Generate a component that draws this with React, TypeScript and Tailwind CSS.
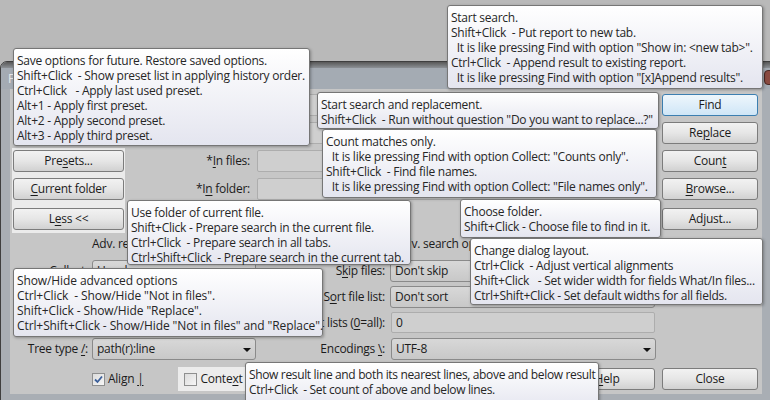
import React from "react";

function U({ children }: { children: React.ReactNode }) {
  return <span className="underline decoration-1 underline-offset-[2px]">{children}</span>;
}

function Tip({ className, lines }: { className: string; lines: string[] }) {
  return (
    <div
      className={`absolute rounded-[3px] border border-[#767676] bg-linear-to-b from-[#ffffff] to-[#e4e5ef] pl-[3px] pt-[4px] text-[#262626] shadow-[1px_1px_3px_rgba(0,0,0,0.3)] ${className}`}
    >
      {lines.map((l, i) => (
        <div key={i} className="h-[15px] whitespace-pre leading-[15px]">
          {l}
        </div>
      ))}
    </div>
  );
}

function Btn({ children, focused }: { children: React.ReactNode; focused?: boolean }) {
  return focused ? (
    <div className="flex h-[22px] w-full items-center justify-center rounded-[3px] border border-[#3c7fb1] bg-linear-to-b from-[#eef6fc] to-[#cfe6f7] text-[#1b1b1b]">
      {children}
    </div>
  ) : (
    <div className="flex h-[22px] w-full items-center justify-center rounded-[3px] border border-[#7c7c7c] bg-linear-to-b from-[#f2f2f2] via-[#e6e6e6] to-[#d1d1d1] text-[#1b1b1b]">
      {children}
    </div>
  );
}

function Combo({ text }: { text?: string }) {
  return (
    <div className="relative flex h-full w-full items-center rounded-[3px] border border-[#8a8a8a] bg-linear-to-b from-[#d8d8d8] to-[#c8c8c8] pl-[4px]">
      <span>{text}</span>
      <svg className="absolute right-[4px] top-[9px]" width="8" height="4" viewBox="0 0 8 4">
        <path d="M0 0h8L4 4z" fill="#111" />
      </svg>
    </div>
  );
}

function Field({ text }: { text?: string }) {
  return (
    <div className="flex h-full w-full items-center rounded-[2px] border border-[#adadad] bg-[#cfcfcf] pl-[4px]">
      {text}
    </div>
  );
}

function Check({ checked }: { checked?: boolean }) {
  return (
    <div className="flex h-[13px] w-[13px] items-center justify-center border border-[#8e8f8f] bg-linear-to-br from-[#dcdcdc] to-[#f6f6f6]">
      {checked ? (
        <svg width="9" height="9" viewBox="0 0 9 9">
          <path d="M1 4.5 L3.5 7 L8 1.5" stroke="#3b5f9a" strokeWidth="1.8" fill="none" />
        </svg>
      ) : null}
    </div>
  );
}

export default function App() {
  return (
    <div className="relative h-[400px] w-[770px] overflow-hidden bg-[#b9b9b9] font-['Open_Sans',sans-serif] text-[12px] tracking-[-0.25px] text-[#1b1b1b]">
      {/* Window */}
      <div className="absolute left-0 top-[61px] flex h-[345px] w-[780px] flex-col rounded-t-[7px] border border-[#3f3f3f] bg-[#a9aeb4]">
        <div className="h-[6px] rounded-t-[6px] bg-linear-to-b from-[#585858] to-[#8d9196]" />
        <div className="relative flex h-[21px] items-center bg-[#a4abb3] pl-[7px] text-[#e8e8e8]">
          Find in Files
          <div className="absolute left-[763px] top-[2px] h-[15px] w-[14px] rounded-[4px] border border-[#4a2a25] bg-[#8a4a40]" />
        </div>
        <div className="ml-[9px] flex h-[305px] w-[752px] bg-[#c6c6c6]">
          {/* Main column */}
          <div className="flex w-[646px] flex-col">
            <div className="mt-[5px] flex h-[22px] items-center">
              <div className="w-[247px]" />
              <div className="mr-[1px] h-full flex-1">
                <Field />
              </div>
            </div>
            <div className="mt-[6px] flex h-[22px] items-center">
              <div className="w-[247px]" />
              <div className="mr-[1px] h-full flex-1">
                <Field />
              </div>
            </div>
            <div className="mt-[4px] flex">
              <div className="ml-[2px] flex w-[113px] flex-col bg-[#ebebeb] pb-[3px] pl-[1px] pr-[1px] pt-[2px]">
                <Btn>
                  Pre<U>s</U>ets...
                </Btn>
                <div className="mt-[6px]">
                  <Btn>
                    <U>C</U>urrent folder
                  </Btn>
                </div>
                <div className="mt-[8px]">
                  <Btn>
                    L<U>e</U>ss &lt;&lt;
                  </Btn>
                </div>
              </div>
              <div className="flex flex-1 flex-col">
                <div className="mt-[2px] flex h-[22px] items-center">
                  <div className="w-[125px] text-right">
                    *<U>I</U>n files:
                  </div>
                  <div className="ml-[7px] mr-[1px] h-full flex-1">
                    <Field />
                  </div>
                </div>
                <div className="mt-[6px] flex h-[22px] items-center">
                  <div className="w-[125px] text-right">
                    *I<U>n</U> folder:
                  </div>
                  <div className="ml-[7px] mr-[1px] h-full flex-1">
                    <Field />
                  </div>
                </div>
              </div>
            </div>
            <div className="mt-[3px] flex h-[16px] items-center">
              <div className="w-[246px] pl-[82px]">Adv. report options</div>
              <div className="pl-[141px]">Adv. search options</div>
            </div>
            {/* lower rows */}
            <div className="mt-[8px] flex h-[22px]">
              <div className="flex w-[246px] items-center">
                <div className="w-[78px] text-right">Collect:</div>
                <div className="ml-[4px] h-full w-[164px]">
                  <Combo text="Usual" />
                </div>
              </div>
              <div className="flex w-[400px] items-center">
                <div className="w-[129px] text-right">
                  S<U>k</U>ip files:
                </div>
                <div className="ml-[5px] h-full w-[265px]">
                  <Combo text="Don't skip" />
                </div>
              </div>
            </div>
            <div className="mt-[4px] flex h-[22px]">
              <div className="flex w-[246px] items-center">
                <div className="ml-[82px] h-full w-[164px]">
                  <Combo />
                </div>
              </div>
              <div className="flex w-[400px] items-center">
                <div className="w-[129px] text-right">
                  S<U>o</U>rt file list:
                </div>
                <div className="ml-[5px] h-full w-[265px]">
                  <Combo text="Don't sort" />
                </div>
              </div>
            </div>
            <div className="mt-[4px] flex h-[21px]">
              <div className="flex w-[246px] items-center">
                <div className="ml-[82px] h-full w-[164px]">
                  <Field />
                </div>
              </div>
              <div className="flex w-[400px] items-center">
                <div className="w-[129px] whitespace-nowrap text-right">
                  Context lists (<U>0</U>=all):
                </div>
                <div className="ml-[6px] h-full w-[264px]">
                  <Field text="0" />
                </div>
              </div>
            </div>
            <div className="mt-[5px] flex h-[22px]">
              <div className="flex w-[246px] items-center">
                <div className="w-[78px] text-right">
                  Tree type <U>/</U>:
                </div>
                <div className="ml-[4px] h-full w-[164px]">
                  <Combo text="path(r):line" />
                </div>
              </div>
              <div className="flex w-[400px] items-center">
                <div className="w-[129px] text-right">
                  Encodings <U>\</U>:
                </div>
                <div className="ml-[6px] h-full w-[265px]">
                  <Combo text="UTF-8" />
                </div>
              </div>
            </div>
            <div className="mt-[8px] flex h-[22px] items-center">
              <div className="ml-[82px] flex items-center">
                <Check checked />
                <span className="ml-[3px]">
                  Align <U>|</U>
                </span>
              </div>
              <div className="ml-[35px] flex h-[24px] items-center bg-[#ececec] pl-[6px] pr-[4px]">
                <Check />
                <span className="ml-[3px]">
                  Conte<U>x</U>t
                </span>
              </div>
              <div className="ml-auto mr-[1px] w-[96px]">
                <Btn>
                  <U>H</U>elp
                </Btn>
              </div>
            </div>
          </div>
          {/* Right column */}
          <div className="ml-[6px] flex w-[96px] flex-col">
            <div className="mt-[5px]">
              <Btn focused>Find</Btn>
            </div>
            <div className="mt-[6px]">
              <Btn>
                Re<U>p</U>lace
              </Btn>
            </div>
            <div className="mt-[6px]">
              <Btn>
                Coun<U>t</U>
              </Btn>
            </div>
            <div className="mt-[6px]">
              <Btn>
                <U>B</U>rowse...
              </Btn>
            </div>
            <div className="mt-[8px]">
              <Btn>
                Ad<U>j</U>ust...
              </Btn>
            </div>
            <div className="mb-[4px] mt-auto">
              <Btn>Close</Btn>
            </div>
          </div>
        </div>
      </div>

      {/* Tooltips */}
      <Tip
        className="left-[447px] top-[5px] h-[84px] w-[316px]"
        lines={[
          "Start search.",
          "Shift+Click  - Put report to new tab.",
          '  It is like pressing Find with option "Show in: <new tab>".',
          "Ctrl+Click  - Append result to existing report.",
          '  It is like pressing Find with option "[x]Append results".',
        ]}
      />
      <Tip
        className="left-[13px] top-[48px] h-[98px] w-[297px]"
        lines={[
          "Save options for future. Restore saved options.",
          "Shift+Click  - Show preset list in applying history order.",
          "Ctrl+Click   - Apply last used preset.",
          "Alt+1 - Apply first preset.",
          "Alt+2 - Apply second preset.",
          "Alt+3 - Apply third preset.",
        ]}
      />
      <Tip
        className="left-[317px] top-[92px] h-[37px] w-[342px]"
        lines={["Start search and replacement.", 'Shift+Click  - Run without question "Do you want to replace...?"']}
      />
      <Tip
        className="left-[322px] top-[129px] h-[69px] w-[335px]"
        lines={[
          "Count matches only.",
          '  It is like pressing Find with option Collect: "Counts only".',
          "Shift+Click  - Find file names.",
          '  It is like pressing Find with option Collect: "File names only".',
        ]}
      />
      <Tip
        className="left-[127px] top-[200px] h-[65px] w-[284px]"
        lines={[
          "Use folder of current file.",
          "Shift+Click - Prepare search in the current file.",
          "Ctrl+Click  - Prepare search in all tabs.",
          "Ctrl+Shift+Click  - Prepare search in the current tab.",
        ]}
      />
      <Tip
        className="left-[460px] top-[199px] h-[39px] w-[201px]"
        lines={["Choose folder.", "Shift+Click - Choose file to find in it."]}
      />
      <Tip
        className="left-[470px] top-[238px] h-[67px] w-[293px]"
        lines={[
          "Change dialog layout.",
          "Ctrl+Click  - Adjust vertical alignments",
          "Shift+Click   - Set wider width for fields What/In files...",
          "Ctrl+Shift+Click - Set default widths for all fields.",
        ]}
      />
      <Tip
        className="left-[13px] top-[268px] h-[69px] w-[310px] tracking-[-0.1px]"
        lines={[
          "Show/Hide advanced options",
          'Ctrl+Click  - Show/Hide "Not in files".',
          'Shift+Click - Show/Hide "Replace".',
          'Ctrl+Shift+Click - Show/Hide "Not in files" and "Replace".',
        ]}
      />
      <Tip
        className="left-[245px] top-[362px] h-[50px] w-[354px] tracking-[-0.35px]"
        lines={[
          "Show result line and both its nearest lines, above and below result",
          "Ctrl+Click  - Set count of above and below lines.",
        ]}
      />
    </div>
  );
}
